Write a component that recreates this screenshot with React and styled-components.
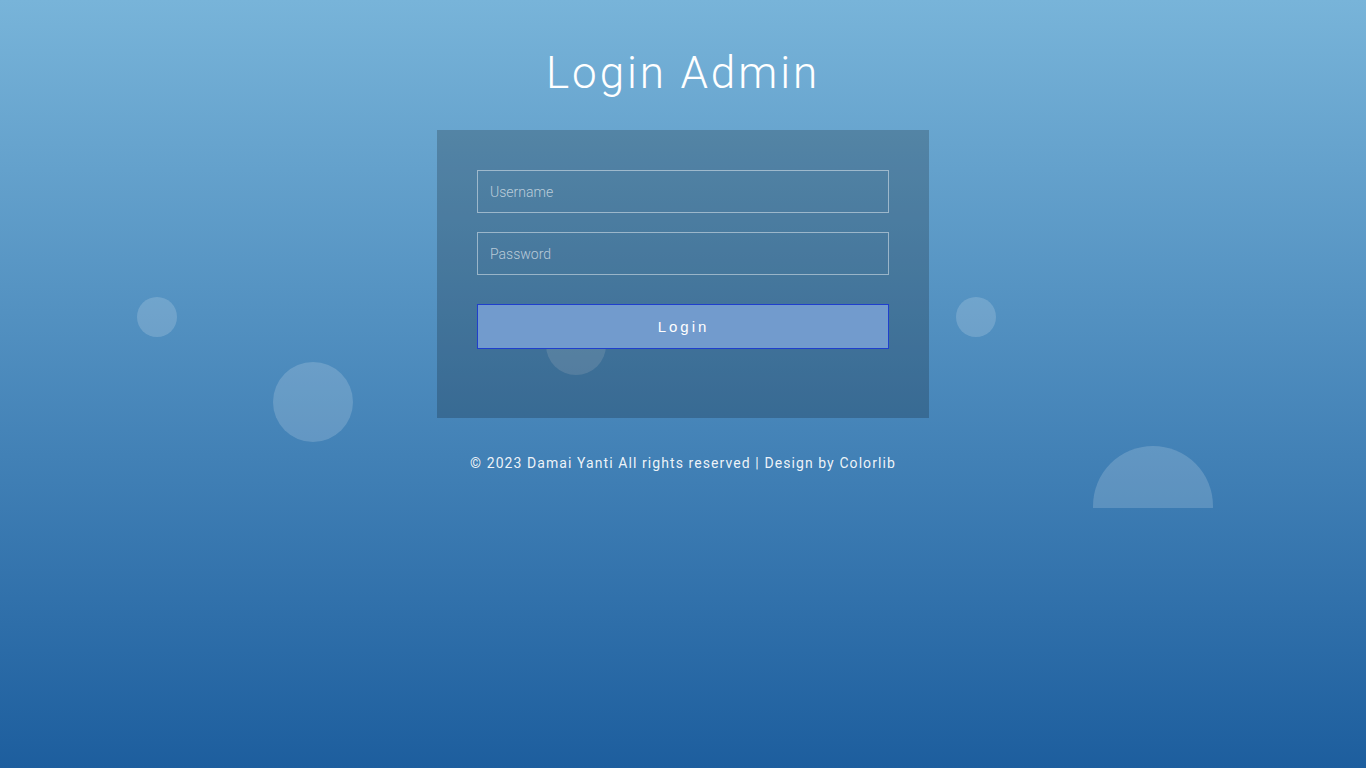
import React from "react";
import styled, { createGlobalStyle } from "styled-components";

const Global = createGlobalStyle`
  html, body { margin: 0; padding: 0; height: 100%; }
  body {
    font-family: Roboto, "Liberation Sans", sans-serif;
    background: linear-gradient(to bottom, #78b4d9 0%, #1d5e9e 100%);
    min-height: 768px;
    overflow: hidden;
  }
  * { box-sizing: border-box; }
`;

const Page = styled.div`
  position: relative;
  width: 100%;
  height: 768px;
`;

const Bubbles = styled.ul`
  position: absolute;
  left: 0;
  top: 0;
  width: 100%;
  height: 508px;
  margin: 0;
  padding: 0;
  list-style: none;
  overflow: hidden;
  z-index: 0;
`;

const Bubble = styled.li`
  position: absolute;
  border-radius: 50%;
  background: rgba(255, 255, 255, 0.17);
  left: ${(p) => p.$x}px;
  top: ${(p) => p.$y}px;
  width: ${(p) => p.$s}px;
  height: ${(p) => p.$s}px;
`;

const Content = styled.div`
  position: relative;
  z-index: 1;
  display: flex;
  flex-direction: column;
  align-items: center;
  padding-top: 44px;
`;

const Title = styled.h1`
  margin: 0;
  color: #fff;
  font-family: Roboto, "Liberation Sans", sans-serif;
  font-weight: 300;
  font-size: 44px;
  line-height: 58px;
  letter-spacing: 2.9px;
`;

const Card = styled.form`
  margin-top: 28px;
  width: 492px;
  padding: 40px 40px 69px;
  background: rgba(0, 0, 0, 0.2);
  display: flex;
  flex-direction: column;
`;

const Input = styled.input`
  width: 100%;
  height: 43px;
  padding: 0 12px;
  border: 1px solid rgba(255, 255, 255, 0.45);
  background: transparent;
  color: #fff;
  font-family: Roboto, "Liberation Sans", sans-serif;
  font-weight: 300;
  font-size: 14px;
  outline: none;
  margin-bottom: ${(p) => p.$gap}px;
  &::placeholder { color: rgba(255, 255, 255, 0.62); }
`;

const Button = styled.button`
  width: 100%;
  height: 45px;
  border: 1px solid #1f3fcc;
  background: #729bcd;
  color: #fff;
  font-family: "Liberation Sans", Arial, sans-serif;
  font-size: 15px;
  letter-spacing: 3px;
  padding: 0 0 0 1px;
  cursor: pointer;
`;

const Footer = styled.p`
  margin: 37px 0 0;
  color: rgba(255, 255, 255, 0.92);
  font-family: Roboto, "Liberation Sans", sans-serif;
  font-size: 14px;
  letter-spacing: 1.08px;
`;

const bubbles = [
  { x: 137, y: 297, s: 40 },
  { x: 273, y: 362, s: 80 },
  { x: 546, y: 315, s: 60 },
  { x: 956, y: 297, s: 40 },
  { x: 1093, y: 446, s: 120 },
];

export default function App() {
  return (
    <Page>
      <Global />
      <Bubbles>
        {bubbles.map((b, i) => (
          <Bubble key={i} $x={b.x} $y={b.y} $s={b.s} />
        ))}
      </Bubbles>
      <Content>
        <Title>Login Admin</Title>
        <Card onSubmit={(e) => e.preventDefault()}>
          <Input type="text" placeholder="Username" $gap={19} />
          <Input type="password" placeholder="Password" $gap={29} />
          <Button type="submit">Login</Button>
        </Card>
        <Footer>© 2023 Damai Yanti All rights reserved | Design by Colorlib</Footer>
      </Content>
    </Page>
  );
}
